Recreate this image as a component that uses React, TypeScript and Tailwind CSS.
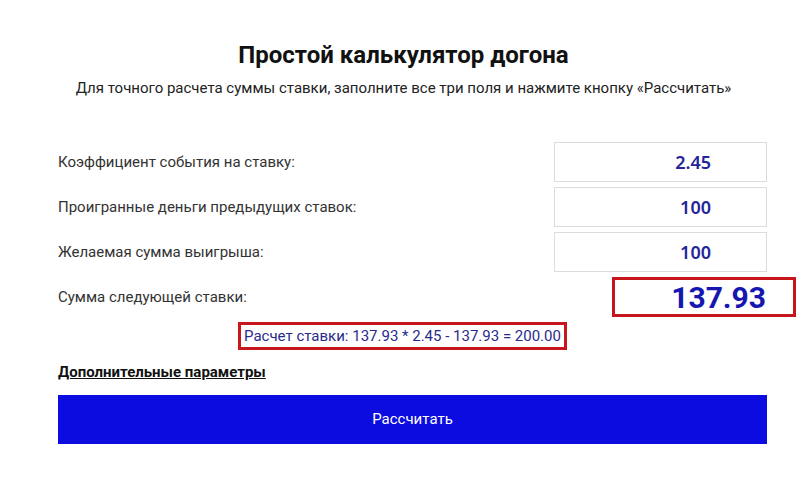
export default function App() {
  const rows = [
    { label: "Коэффициент события на ставку:", value: "2.45" },
    { label: "Проигранные деньги предыдущих ставок:", value: "100" },
    { label: "Желаемая сумма выигрыша:", value: "100" },
  ];
  return (
    <div className="w-[807px] h-[478px] bg-white overflow-hidden text-[#222]" style={{ fontFamily: "Roboto, 'Liberation Sans', sans-serif" }}>
      <div className="pt-[40px] flex flex-col items-center">
        <h1 className="text-[24px] leading-[30px] font-bold text-[#111]">Простой калькулятор догона</h1>
        <p className="mt-[8px] text-[15px] leading-[20px] text-[#222]">
          Для точного расчета суммы ставки, заполните все три поля и нажмите кнопку «Рассчитать»
        </p>
      </div>
      <div className="ml-[58px] w-[709px] mt-[44px] flex flex-col gap-[5px]">
        {rows.map((r) => (
          <div key={r.label} className="flex items-center justify-between h-[40px]">
            <span className="text-[15px] text-[#333]">{r.label}</span>
            <div
              className="w-[213px] h-[40px] border border-[#dcdcdc] flex items-center justify-end pr-[55px] text-[18px] font-semibold text-[#25259a]"
              style={{ fontFamily: "'Noto Sans', 'Open Sans', sans-serif" }}
            >
              {r.value}
            </div>
          </div>
        ))}
        <div className="flex items-center justify-between h-[40px] mr-[-29px]">
          <span className="text-[15px] text-[#333]">Сумма следующей ставки:</span>
          <div className="w-[184px] h-[40px] border-[3px] border-[#c8161d] flex items-center justify-end pr-[27px] text-[30px] font-bold text-[#1616b0]">
            137.93
          </div>
        </div>
      </div>
      <div className="flex justify-center mt-[5px] pr-[2px]">
        <div className="h-[28px] px-[3px] border-[3px] border-[#c8161d] flex items-center text-[15px] text-[#2a2a8c]">
          Расчет ставки: 137.93 * 2.45 - 137.93 = 200.00
        </div>
      </div>
      <div className="ml-[58px] mt-[12px] text-[15px] font-bold underline text-[#111] leading-[20px]">
        Дополнительные параметры
      </div>
      <button className="ml-[58px] mt-[13px] w-[709px] h-[49px] bg-[#0c0ce0] text-white text-[15px] flex items-center justify-center">
        Рассчитать
      </button>
    </div>
  );
}
